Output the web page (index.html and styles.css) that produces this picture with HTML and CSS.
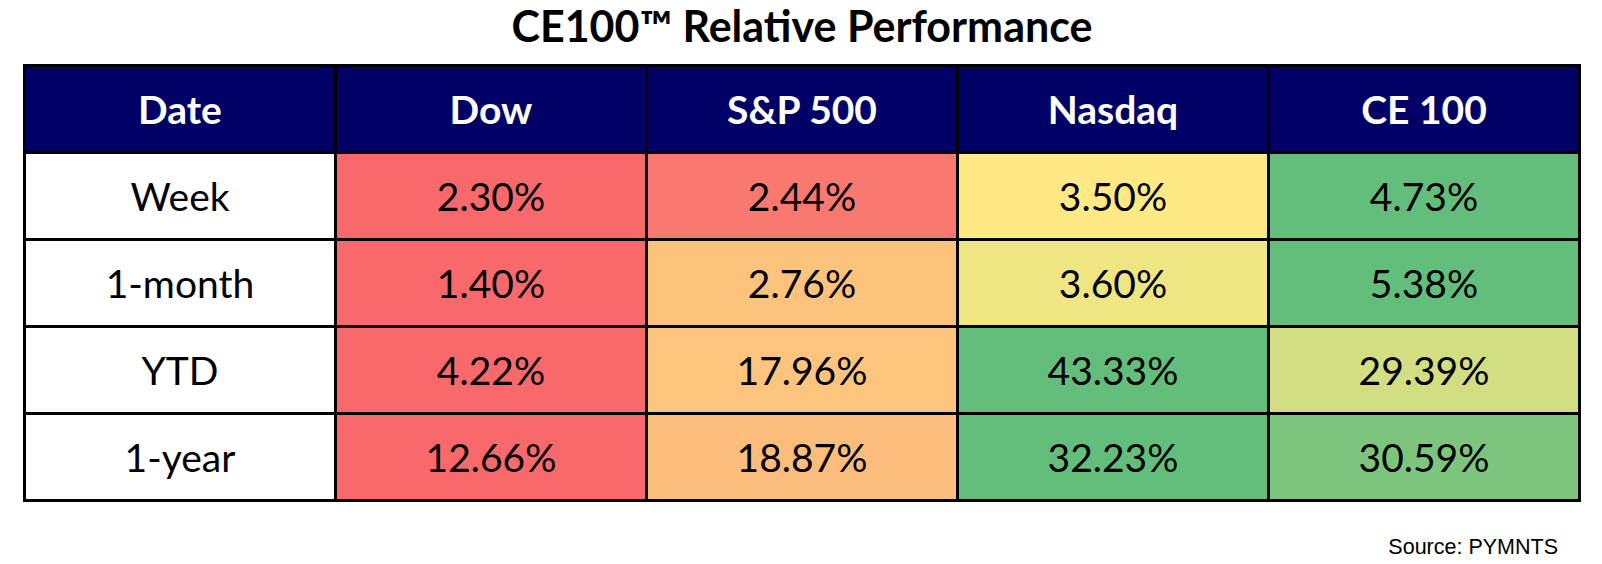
FILE: index.html
```html
<!DOCTYPE html>
<html lang="en">
<head>
<meta charset="utf-8">
<title>CE100 Relative Performance</title>
<link rel="stylesheet" href="styles.css">
</head>
<body>
<main class="page">
  <h1 class="title">CE100™ Relative Performance</h1>
  <div class="perf-table">
    <div class="cell head">Date</div>
    <div class="cell head">Dow</div>
    <div class="cell head">S&amp;P 500</div>
    <div class="cell head">Nasdaq</div>
    <div class="cell head">CE 100</div>

    <div class="cell label">Week</div>
    <div class="cell" style="background:#F8696B">2.30%</div>
    <div class="cell" style="background:#F97870">2.44%</div>
    <div class="cell" style="background:#FFE984">3.50%</div>
    <div class="cell" style="background:#63BE7B">4.73%</div>

    <div class="cell label">1-month</div>
    <div class="cell" style="background:#F8696B">1.40%</div>
    <div class="cell" style="background:#FDC27C">2.76%</div>
    <div class="cell" style="background:#EFE683">3.60%</div>
    <div class="cell" style="background:#63BE7B">5.38%</div>

    <div class="cell label">YTD</div>
    <div class="cell" style="background:#F8696B">4.22%</div>
    <div class="cell" style="background:#FDC47D">17.96%</div>
    <div class="cell" style="background:#63BE7B">43.33%</div>
    <div class="cell" style="background:#D2DE81">29.39%</div>

    <div class="cell label">1-year</div>
    <div class="cell" style="background:#F8696B">12.66%</div>
    <div class="cell" style="background:#FCBC7B">18.87%</div>
    <div class="cell" style="background:#63BE7B">32.23%</div>
    <div class="cell" style="background:#7DC57C">30.59%</div>
  </div>
  <p class="source">Source: PYMNTS</p>
</main>
</body>
</html>
```

FILE: styles.css
```css
html, body {
  margin: 0;
  padding: 0;
  background: #ffffff;
}

.page {
  width: 1602px;
  padding: 0 21px 0 23px;
  box-sizing: border-box;
  font-family: "Lato", "Liberation Sans", sans-serif;
  color: #000000;
}

.title {
  margin: 1px 0 0 0;
  font-size: 43px;
  font-weight: 700;
  line-height: 50px;
  text-align: center;
}

.perf-table {
  margin-top: 13px;
  display: grid;
  grid-template-columns: repeat(5, 308px);
  grid-auto-rows: 84px;
  gap: 3px;
  padding: 3px;
  background: #000000;
  width: 1558px;
  box-sizing: border-box;
}

.cell {
  display: flex;
  align-items: center;
  justify-content: center;
  font-size: 39px;
  line-height: 46px;
  font-weight: 400;
  background: #ffffff;
  color: #000000;
}

.cell.head {
  background: #000066;
  color: #ffffff;
  font-weight: 700;
}

.source {
  margin: 33px 23px 0 0;
  font-family: "Liberation Sans", Arial, sans-serif;
  font-size: 21.5px;
  line-height: 24px;
  text-align: right;
  color: #000000;
}
```
